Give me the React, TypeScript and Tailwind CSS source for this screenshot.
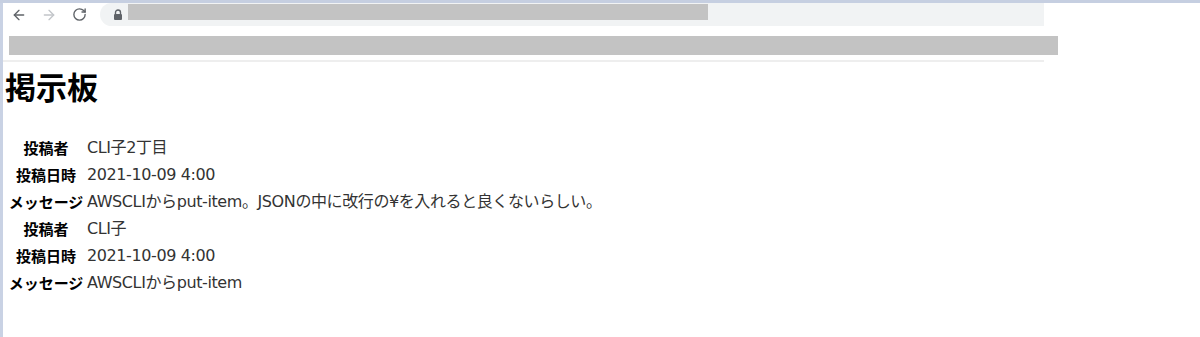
import { ArrowLeft, ArrowRight, RotateCw } from "lucide-react";

const posts = [
  { author: "CLI子2丁目", date: "2021-10-09 4:00", message: "AWSCLIからput-item。JSONの中に改行の¥を入れると良くないらしい。" },
  { author: "CLI子", date: "2021-10-09 4:00", message: "AWSCLIからput-item" },
];

function Row({ label, value }: { label: string; value: string }) {
  return (
    <div className="flex h-[27px] items-center">
      <div className="ml-[2px] w-[82px] text-center font-bold text-black text-[15px] [font-family:'Noto_Sans_CJK_JP',sans-serif] leading-[24px]">
        {label}
      </div>
      <div className="text-[16px] text-[#333] leading-[24px] tracking-[-0.4px] whitespace-nowrap [font-family:'DejaVu_Sans','Noto_Sans_CJK_JP',sans-serif]">
        {value}
      </div>
    </div>
  );
}

function Lock() {
  return (
    <svg width="10" height="11" viewBox="0 0 10 11" className="block">
      <path d="M2.5 5V3.5a2.5 2.5 0 0 1 5 0V5" fill="none" stroke="#5f6368" strokeWidth="1.4" />
      <rect x="1" y="5" width="8" height="6" rx="1" fill="#5f6368" />
    </svg>
  );
}

export default function App() {
  return (
    <div className="w-[1200px] h-[337px] overflow-hidden bg-white flex flex-col">
      <div className="h-[3px] w-full bg-[#c6cfe1] shrink-0" />
      <div className="flex flex-1">
        <div className="w-[3px] bg-[#c9d2e4] shrink-0" />
        <div className="flex-1 flex flex-col">
          {/* toolbar */}
          <div className="h-[23px] flex items-center">
            <div className="flex items-center">
              <ArrowLeft size={16} strokeWidth={2} className="ml-[8px] text-[#5f6368]" />
              <ArrowRight size={16} strokeWidth={2} className="ml-[14px] text-[#c2c5c9]" />
              <RotateCw size={15} strokeWidth={2.2} className="ml-[15px] text-[#5f6368]" />
            </div>
            <div className="ml-[13px] w-[944px] h-[23px] rounded-l-full bg-[#f1f3f4] flex items-start">
              <div className="ml-[13px] mt-[6px]">
                <Lock />
              </div>
              <div className="ml-[5px] mt-[1px] w-[580px] h-[16px] bg-[#c3c3c3]" />
            </div>
          </div>
          <div className="mt-[10px] ml-[6px] w-[1049px] h-[19px] bg-[#c3c3c3]" />
          <div className="mt-[5px] w-[1041px] h-[2px] bg-[#eeeeee]" />
          <h1 className="mt-[4px] ml-[2px] h-[40px] text-[31px] leading-[40px] font-bold text-black [font-family:'Noto_Sans_CJK_JP',sans-serif]">
            掲示板
          </h1>
          <div className="mt-[28px] flex flex-col">
            {posts.map((p, i) => (
              <div key={i} className="flex flex-col">
                <Row label="投稿者" value={p.author} />
                <Row label="投稿日時" value={p.date} />
                <Row label="メッセージ" value={p.message} />
              </div>
            ))}
          </div>
        </div>
      </div>
    </div>
  );
}
